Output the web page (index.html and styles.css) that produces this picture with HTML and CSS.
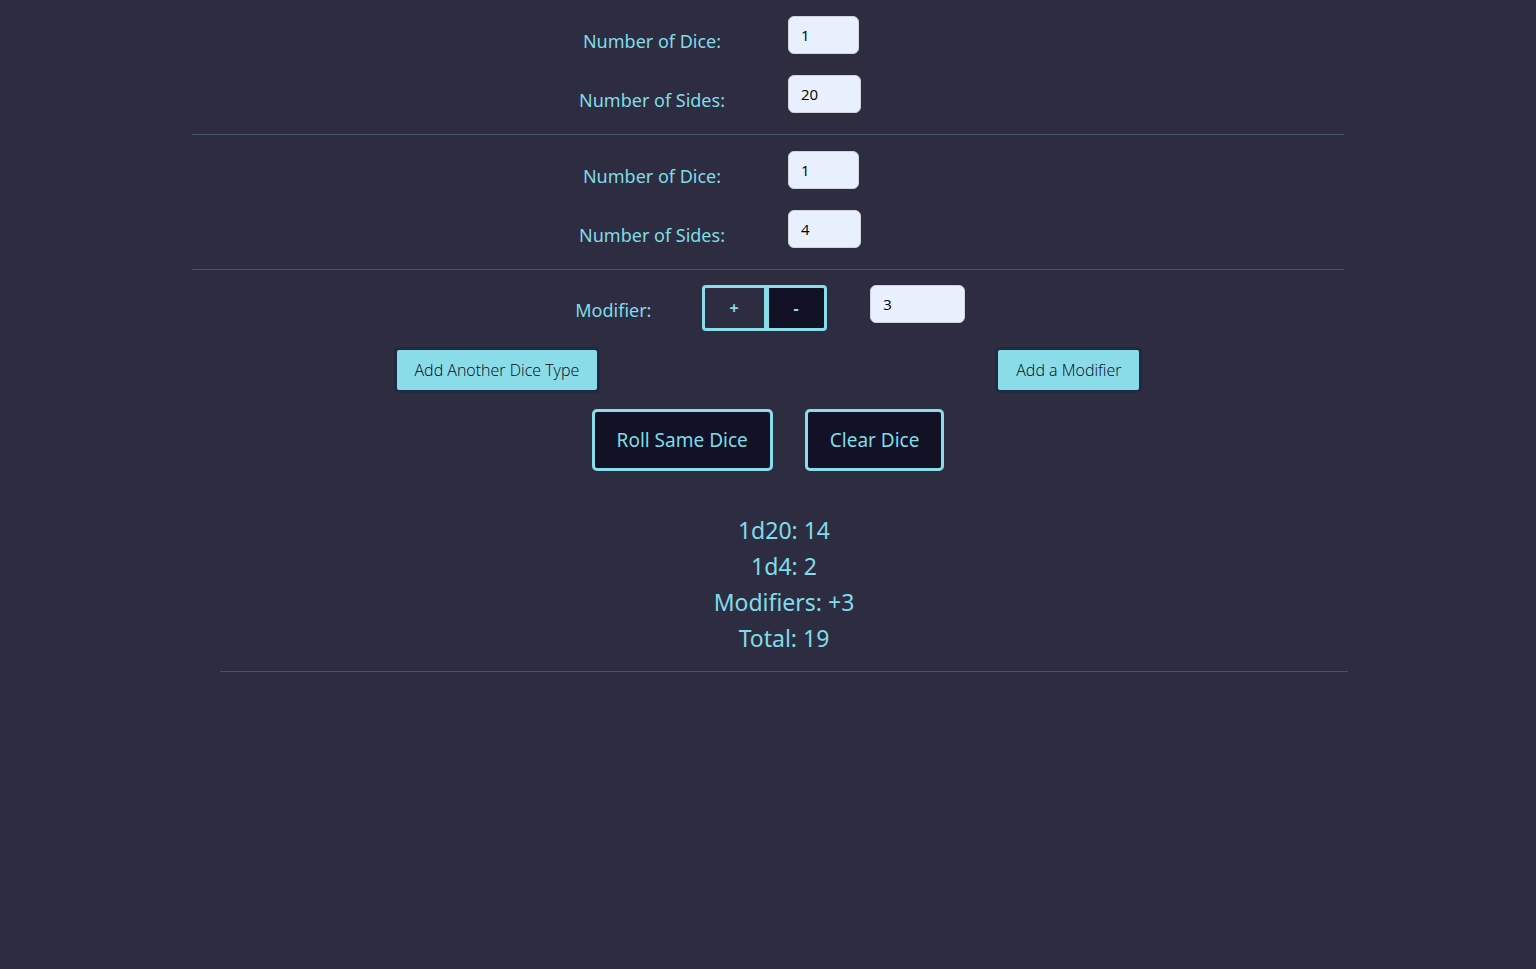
FILE: index.html
```html
<!DOCTYPE html>
<html lang="en">
<head>
<meta charset="utf-8">
<meta name="viewport" content="width=device-width, initial-scale=1">
<title>Dice Roller</title>
<link rel="stylesheet" href="styles.css">
</head>
<body>
<main class="roller">
  <form class="dice-form">
    <fieldset class="dice-group">
      <div class="field-row">
        <label class="field-label" for="dice-1">Number of Dice:</label>
        <input class="field-input count" id="dice-1" type="text" inputmode="numeric" value="1">
      </div>
      <div class="field-row">
        <label class="field-label" for="sides-1">Number of Sides:</label>
        <input class="field-input sides" id="sides-1" type="text" inputmode="numeric" value="20">
      </div>
    </fieldset>
    <fieldset class="dice-group">
      <div class="field-row">
        <label class="field-label" for="dice-2">Number of Dice:</label>
        <input class="field-input count" id="dice-2" type="text" inputmode="numeric" value="1">
      </div>
      <div class="field-row">
        <label class="field-label" for="sides-2">Number of Sides:</label>
        <input class="field-input sides" id="sides-2" type="text" inputmode="numeric" value="4">
      </div>
    </fieldset>
    <div class="modifier-row">
      <label class="field-label" for="modifier">Modifier:</label>
      <div class="sign-group">
        <button class="sign plus" type="button">+</button>
        <button class="sign minus" type="button">-</button>
      </div>
      <input class="field-input modifier" id="modifier" type="text" inputmode="numeric" value="3">
    </div>
    <div class="add-row">
      <button class="add-button" type="button">Add Another Dice Type</button>
      <button class="add-button" type="button">Add a Modifier</button>
    </div>
    <div class="action-row">
      <button class="action-button" type="button">Roll Same Dice</button>
      <button class="action-button" type="button">Clear Dice</button>
    </div>
  </form>
  <section class="results">
    <p>1d20: 14</p>
    <p>1d4: 2</p>
    <p>Modifiers: +3</p>
    <p>Total: 19</p>
  </section>
</main>
</body>
</html>
```

FILE: styles.css
```css
* { box-sizing: border-box; }

body {
  margin: 0;
  background: #2e2c40;
  color: #7fdce8;
  font-family: "Segoe UI", "Noto Sans", "Open Sans", sans-serif;
  font-size: 18px;
  line-height: 30px;
}

button, input { font-family: inherit; }

.roller {
  width: 75%;
  margin: 0 auto;
}

.dice-group {
  display: grid;
  gap: 16px;
  min-width: 0;
  margin: 0;
  padding: 16px 0;
  border: 0;
  border-bottom: 1px solid #44546a;
}

.field-row, .modifier-row {
  display: grid;
  grid-template-columns: 1fr 1fr;
  align-items: start;
  width: 100%;
  max-width: 464px;
  min-height: 43px;
  margin: 0 auto;
}

.modifier-row {
  grid-template-columns: 1fr 1fr 1fr;
  margin-top: 15px;
}

.field-label {
  padding-top: 10px;
  text-align: center;
}

.field-input {
  height: 38px;
  margin-left: 20px;
  padding: 0 12px;
  border: 1px solid #ced4da;
  border-radius: 6px;
  background: #e8f0fe;
  color: #000;
  font-family: "Open Sans", sans-serif;
  font-size: 15px;
}

.count { width: 71px; }
.sides { width: 73px; }
.modifier { width: 95px; margin-left: 25px; }

.sign-group {
  display: flex;
  margin-left: 11px;
}

.sign {
  height: 46px;
  padding: 0;
  border: 3px solid #8adde8;
  background: transparent;
  color: #8adde8;
  font-size: 16px;
  font-weight: 700;
}

.plus {
  width: 65px;
  border-radius: 4px 0 0 4px;
}

.minus {
  width: 60px;
  border-left-width: 2px;
  border-radius: 0 4px 4px 0;
  background: #131126;
}

.add-row {
  display: flex;
  flex-wrap: wrap;
  justify-content: space-around;
  margin-top: 16px;
  padding: 0 4px;
}

.add-button {
  height: 46px;
  padding: 0 18px;
  border: 3px solid #202842;
  border-radius: 5px;
  background: #8adde8;
  color: #060512;
  font-family: "Open Sans", sans-serif;
  font-size: 16px;
  font-weight: 300;
}

.action-row {
  display: flex;
  flex-wrap: wrap;
  justify-content: center;
  gap: 32px;
  margin-top: 16px;
}

.action-button {
  height: 62px;
  padding: 0 22px;
  border: 3px solid #8adde8;
  border-radius: 5px;
  background: #131126;
  color: #7fdce8;
  font-size: 19px;
}

.results {
  margin: 41px -4px 0 28px;
  padding-bottom: 15px;
  border-bottom: 1px solid #44546a;
  font-size: 23px;
  line-height: 36px;
  text-align: center;
}

.results p { margin: 0; }
```
